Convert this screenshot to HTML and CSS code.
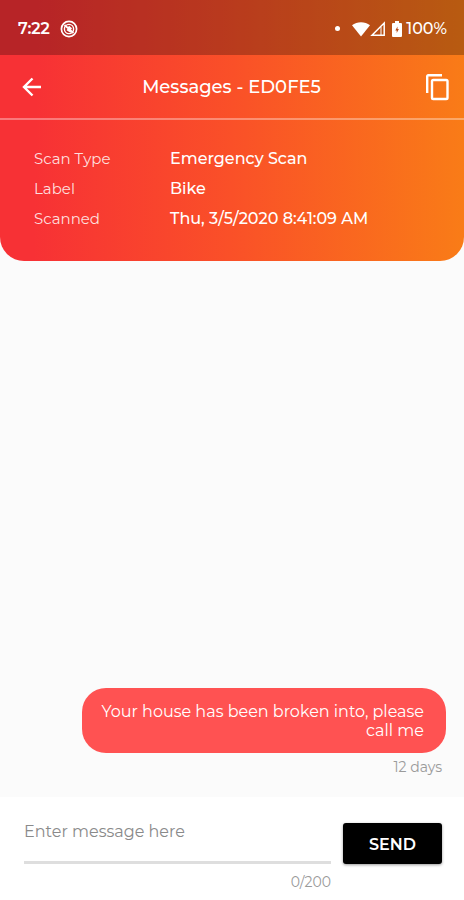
FILE: index.html
```
<!DOCTYPE html>
<html lang="en">
<head>
    <meta charset="UTF-8">
    <meta name="viewport" content="width=device-width, initial-scale=1.0">
    <title>Messages - ED0FE5</title>
    <link rel="stylesheet" href="styles.css">
</head>
<body>
    <header class="header">
        <div class="status-bar">
            <span class="time">7:22</span>
            <svg class="status-app" width="18" height="18" viewBox="0 0 18 18" fill="none" stroke="#fff">
                <circle cx="9" cy="9" r="7.6" stroke-width="1.7"/>
                <circle cx="9" cy="9" r="4.6" stroke-width="1.4"/>
                <path d="M4.500 5l9 8M7 9.500l4 2.500M8.500 6.500l3 2.500" stroke-width="1.7"/>
            </svg>
            <span class="dot"></span>
            <svg width="18" height="16" viewBox="0 0 18 16" fill="#fff">
                <path d="M0 4.200C5 .1 13 .1 18 4.200L9 15.500z"/>
            </svg>
            <svg width="16" height="16" viewBox="0 0 16 16" fill="none" stroke="#fff" stroke-width="1.5">
                <path d="M2 14.200L14.200 2v12.200z"/>
                <path d="M11 6v8" stroke-width="1"/>
            </svg>
            <svg class="battery" width="10" height="16" viewBox="0 0 10 16">
                <path d="M3 0h4v2h2a1 1 0 0 1 1 1v12a1 1 0 0 1-1 1H1a1 1 0 0 1-1-1V3a1 1 0 0 1 1-1h2z" fill="#fff"/>
                <path d="M5.500 5.500L3.300 9.500h1.400V12l2.200-4H5.500z" fill="#b84c1b"/>
            </svg>
            <span class="percent">100%</span>
        </div>

        <div class="title-bar">
            <button class="icon-button" type="button" aria-label="Back">
                <svg width="20" height="20" viewBox="0 0 20 20" fill="none" stroke="#fff" stroke-width="2.4">
                    <path d="M19 10H2.500M10.500 1.500L2 10l8.500 8.500"/>
                </svg>
            </button>
            <h1>Messages - ED0FE5</h1>
            <button class="icon-button" type="button" aria-label="Copy">
                <svg width="24" height="28" viewBox="0 0 24 28" fill="none" stroke="#fff" stroke-width="2.4">
                    <path d="M2.200 20V3.200a1 1 0 0 1 1-1H17"/>
                    <rect x="7" y="7" width="15.500" height="19" rx="1.3"/>
                </svg>
            </button>
        </div>

        <dl class="details">
            <dt>Scan Type</dt>
            <dd>Emergency Scan</dd>
            <dt>Label</dt>
            <dd>Bike</dd>
            <dt>Scanned</dt>
            <dd>Thu, 3/5/2020 8:41:09 AM</dd>
        </dl>
    </header>

    <main class="messages">
        <p class="bubble">Your house has been broken into, please call me</p>
        <span class="age">12 days</span>
    </main>

    <form class="composer">
        <div class="field">
            <input type="text" id="message" maxlength="200" placeholder="Enter message here" aria-label="Enter message here">
            <label class="counter" for="message">0/200</label>
        </div>
        <button class="send" type="button">SEND</button>
    </form>
</body>
</html>
```
FILE: styles.css
```
* {
    box-sizing: border-box;
}
body {
    display: flex;
    flex-direction: column;
    min-height: 100vh;
    margin: 0;
    font-family: Montserrat, Inter, sans-serif;
    font-size: 16px;
    background-color: #fbfbfb;
}
.header {
    overflow: hidden;
    color: #fff;
    background: linear-gradient(91deg, #f73135 8%, #fa5028 50%, #f97c17);
    border-radius: 0 0 24px 24px;
}
.status-bar {
    display: flex;
    align-items: center;
    height: 55px;
    padding: 2px 17px 0 18px;
    font-weight: 600;
    background-color: rgba(0, 0, 0, 0.26);
}
.status-app {
    margin-left: 10px;
}
.dot {
    width: 5px;
    height: 5px;
    margin: 0 12px 0 auto;
    border-radius: 50%;
    background-color: #fff;
}
.battery {
    margin: 0 4px 0 6px;
}
.percent {
    font-weight: 500;
}
.title-bar {
    display: flex;
    align-items: center;
    justify-content: space-between;
    height: 65px;
    padding: 0 15px 0 22px;
    border-bottom: 2px solid rgba(255, 255, 255, 0.35);
}
.title-bar h1 {
    margin: 0 4px 0 0;
    font-size: 18px;
    font-weight: 500;
}
.icon-button {
    display: flex;
    align-items: center;
    padding: 0;
    border: 0;
    background: none;
}
.details {
    display: grid;
    grid-template-columns: 136px 1fr;
    margin: 0;
    padding: 24px 34px 27px;
    line-height: 30px;
}
.details dt {
    font-size: 15px;
    color: rgba(255, 255, 255, 0.85);
}
.details dd {
    margin: 0;
    font-weight: 500;
}
.messages {
    display: flex;
    flex: 1;
    flex-direction: column;
    align-items: flex-end;
    justify-content: flex-end;
    padding: 18px 18px 20px 82px;
}
.bubble {
    margin: 0;
    padding: 14px 22px 13px 16px;
    line-height: 19px;
    text-align: right;
    color: #fff;
    background-color: #ff5252;
    border-radius: 24px;
}
.age {
    margin: 4px 4px 0 0;
    font-size: 14px;
    line-height: 20px;
    color: #9a9a9a;
}
.composer {
    display: flex;
    align-items: center;
    gap: 12px;
    height: 103px;
    padding: 0 22px 0 24px;
    background-color: #fff;
}
.field {
    display: flex;
    flex: 1;
    flex-direction: column;
    padding-top: 6px;
}
.field input {
    width: 100%;
    height: 52px;
    padding: 0 0 10px;
    border: 0;
    border-bottom: 3px solid #dedede;
    outline: none;
    font: inherit;
    background: none;
}
.field input::placeholder {
    color: #8a8a8a;
}
.counter {
    align-self: flex-end;
    margin-top: 8px;
    font-size: 14px;
    line-height: 20px;
    color: #9a9a9a;
}
.send {
    width: 99px;
    height: 41px;
    margin-top: -10px;
    padding: 2px 0 0;
    border: 0;
    border-radius: 3px;
    font: inherit;
    font-weight: 600;
    color: #fff;
    background-color: #000;
    box-shadow: 0 1px 3px rgba(0, 0, 0, 0.4);
}
```
